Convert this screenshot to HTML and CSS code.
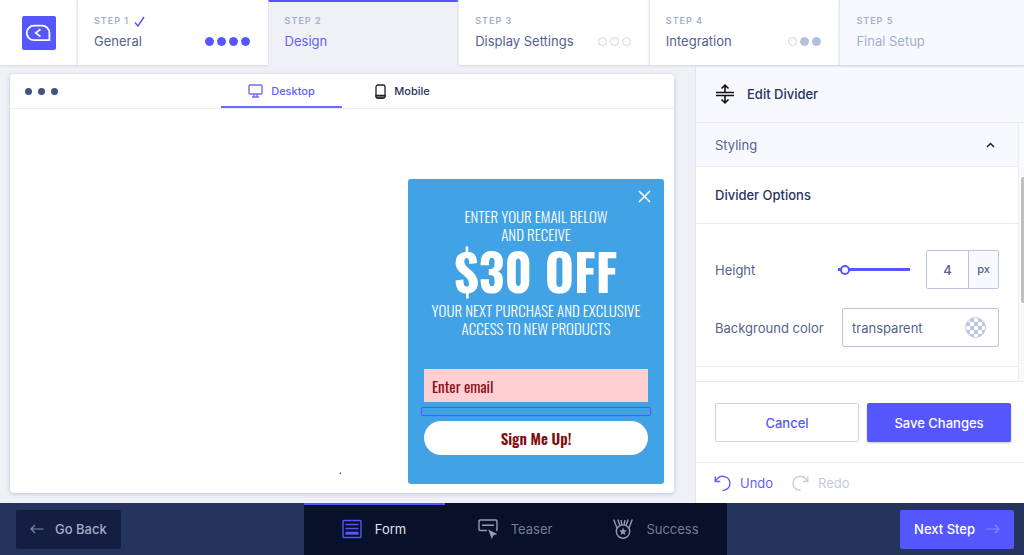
FILE: index.html
```html
<!DOCTYPE html>
<html lang="en">
<head>
    <meta charset="UTF-8">
    <meta name="viewport" content="width=device-width, initial-scale=1.0">
    <title>Campaign Design</title>
    <link rel="stylesheet" href="styles.css">
</head>
<body>
    <header class="steps">
        <a href="#" class="logo" aria-label="Home">
            <svg width="34" height="34" viewBox="0 0 34 34" fill="none">
                <rect width="34" height="34" rx="2" fill="#5656ff"/>
                <path d="M12 9.700h8.200a7.200 7.200 0 0 1 7.200 7.200v7.300H12a7.250 7.250 0 0 1 0-14.500z" stroke="#fff" stroke-width="1.800"/>
                <path d="M18.500 13.200l-4.700 3.700 4.700 3.700" stroke="#fff" stroke-width="1.800"/>
            </svg>
        </a>
        <a href="#general" class="step">
            <span class="step-label">STEP 1
                <svg width="11" height="11" viewBox="0 0 11 11" fill="none" stroke="#5656ff" stroke-width="1.500"><path d="M1 6.500l3 3.500L10 1"/></svg>
            </span>
            <span class="step-row">General
                <span class="dots"><i class="dot done"></i><i class="dot done"></i><i class="dot done"></i><i class="dot done"></i></span>
            </span>
        </a>
        <a href="#design" class="step active">
            <span class="step-label">STEP 2</span>
            <span class="step-row">Design</span>
        </a>
        <a href="#display" class="step">
            <span class="step-label">STEP 3</span>
            <span class="step-row">Display Settings
                <span class="dots"><i class="dot"></i><i class="dot"></i><i class="dot"></i></span>
            </span>
        </a>
        <a href="#integration" class="step">
            <span class="step-label">STEP 4</span>
            <span class="step-row">Integration
                <span class="dots"><i class="dot"></i><i class="dot filled"></i><i class="dot filled"></i></span>
            </span>
        </a>
        <a href="#final" class="step disabled">
            <span class="step-label">STEP 5</span>
            <span class="step-row">Final Setup</span>
        </a>
    </header>

    <main class="workspace">
        <section class="preview">
            <div class="browser">
                <div class="browser-bar">
                    <div class="browser-dots"><i></i><i></i><i></i></div>
                    <button type="button" class="device active">
                        <svg width="15" height="14" viewBox="0 0 15 14" fill="none" stroke="#6c6cff" stroke-width="1.400"><rect x="1" y="1" width="13" height="9" rx="1"/><path d="M6 10v2.500M9 10v2.500M4 13h7"/></svg>
                        Desktop
                    </button>
                    <button type="button" class="device">
                        <svg width="11" height="15" viewBox="0 0 11 15" fill="none" stroke="#222" stroke-width="1.300"><rect x="1" y="1" width="9" height="13" rx="2"/><path d="M1 11.500h9v1q0 1.500-2 1.500H3q-2 0-2-1.500z" fill="#888"/></svg>
                        Mobile
                    </button>
                </div>
                <div class="canvas">
                    <p class="canvas-text">.</p>
                    <form class="popup">
                        <button type="button" class="popup-close" aria-label="Close">
                            <svg width="13" height="13" viewBox="0 0 13 13" stroke="#fff" stroke-width="1.500"><path d="M1 1l11 11M12 1L1 12"/></svg>
                        </button>
                        <p class="popup-text">ENTER YOUR EMAIL BELOW<br>AND RECEIVE</p>
                        <h2 class="popup-offer">$30 OFF</h2>
                        <p class="popup-text">YOUR NEXT PURCHASE AND EXCLUSIVE<br>ACCESS TO NEW PRODUCTS</p>
                        <input type="email" class="popup-email" placeholder="Enter email" aria-label="Enter email">
                        <div class="popup-divider"></div>
                        <button type="button" class="popup-submit">Sign Me Up!</button>
                    </form>
                </div>
            </div>
        </section>

        <aside class="sidebar">
            <div class="sidebar-title">
                <svg width="18" height="20" viewBox="0 0 18 20" fill="none" stroke="#111" stroke-width="1.600"><path d="M0 8.500h18M0 11.500h18M9 8.500V1.500M5.500 4.500L9 1.200l3.500 3.300M9 11.500v7M5.500 15.500L9 18.800l3.500-3.300"/></svg>
                <h1>Edit Divider</h1>
            </div>
            <div class="options">
                <div class="options-list">
                    <button type="button" class="accordion">Styling
                        <svg width="9" height="6" viewBox="0 0 9 6" fill="none" stroke="#222" stroke-width="1.500"><path d="M1 5l3.500-3.500L8 5"/></svg>
                    </button>
                    <h2 class="options-heading">Divider Options</h2>
                    <div class="fields">
                        <div class="field">
                            <label for="height">Height</label>
                            <input type="range" id="height" class="slider" min="0" max="100" value="4">
                            <span class="unit-input">
                                <input type="text" value="4" aria-label="Height in pixels">
                                <span>px</span>
                            </span>
                        </div>
                        <div class="field">
                            <label for="color">Background color</label>
                            <span class="color-input">
                                <input type="text" id="color" value="transparent">
                                <i class="swatch"></i>
                            </span>
                        </div>
                    </div>
                </div>
                <div class="scrollbar"><div class="thumb"></div></div>
            </div>
            <div class="actions">
                <button type="button" class="btn btn-outline">Cancel</button>
                <button type="button" class="btn btn-primary">Save Changes</button>
            </div>
            <div class="history">
                <button type="button" class="history-btn">
                    <svg width="17" height="17" viewBox="0 0 17 17" fill="none" stroke="currentColor" stroke-width="1.400"><path d="M1.200 1.500v5h5M1.400 6.200C4 2 8 .500 11.500 1.800c5.500 2 6 10.200.5 12.700-1 .6-2 .9-3.500 1"/></svg>
                    Undo
                </button>
                <button type="button" class="history-btn" disabled>
                    <svg width="17" height="17" viewBox="0 0 17 17" fill="none" stroke="currentColor" stroke-width="1.400"><path d="M15.800 1.500v5h-5M15.600 6.200C13 2 9 .500 5.500 1.800c-5.500 2-6 10.200-.5 12.700 1 .6 2 .9 3.500 1"/></svg>
                    Redo
                </button>
            </div>
        </aside>
    </main>

    <footer class="bottom-bar">
        <button type="button" class="btn btn-back">
            <svg width="14" height="10" viewBox="0 0 14 10" fill="none" stroke="#7f89a8" stroke-width="1.200"><path d="M13.500 5H1M5 1L1 5l4 4"/></svg>
            Go Back
        </button>
        <nav class="views">
            <a href="#form" class="view active">
                <svg width="20" height="20" viewBox="0 0 20 20" fill="none" stroke="#5656ff" stroke-width="1.400"><rect x="1" y="1.500" width="18" height="17" rx="1"/><path d="M3.500 5.500h13M3.500 9.500h13"/><path d="M3.500 14.200h13" stroke-width="3"/></svg>
                Form
            </a>
            <a href="#teaser" class="view">
                <svg width="20" height="20" viewBox="0 0 20 20" fill="none" stroke="#929bb9" stroke-width="1.400"><path d="M9 11.500H2q-1 0-1-1V2q0-1 1-1h16q1 0 1 1v8.500q0 1-1 1M4 6.200h12"/><path d="M10.200 10.500l9 4.600-3.800 1.300-1.600 3.600z" fill="#929bb9" stroke="none"/></svg>
                Teaser
            </a>
            <a href="#success" class="view">
                <svg width="20" height="20" viewBox="0 0 20 20" fill="none" stroke="#929bb9" stroke-width="1.400"><circle cx="10" cy="12.600" r="6.700"/><path d="M4 9L.700.500M7 6.500L4.800.500M13 6.500l2.200-6M16 9L19.300.500M9 5.800L8 1M11 5.800L12 1"/><path d="M10 8.700l1.100 2.600 2.800.2-2.200 1.800.7 2.800-2.400-1.500-2.400 1.500.7-2.800-2.200-1.800 2.800-.2z" fill="#929bb9" stroke="none"/></svg>
                Success
            </a>
        </nav>
        <button type="button" class="btn btn-next">
            Next Step
            <svg width="14" height="10" viewBox="0 0 14 10" fill="none" stroke="#8888ff" stroke-width="1.200"><path d="M.500 5H13M9 1l4 4-4 4"/></svg>
        </button>
    </footer>
</body>
</html>
```
FILE: styles.css
```css
* {
    box-sizing: border-box;
}

body {
    margin: 0;
    min-height: 100vh;
    display: flex;
    flex-direction: column;
    background: #f0f1f7;
    color: #53638c;
    font-family: Inter, "Liberation Sans", sans-serif;
    font-size: 13px;
    line-height: 16px;
}

h1, h2, p {
    margin: 0;
}

a {
    color: inherit;
    text-decoration: none;
}

button, input {
    font: inherit;
    color: inherit;
    margin: 0;
}

button {
    cursor: pointer;
    border: none;
    background: none;
    padding: 0;
}

svg {
    display: block;
    flex: none;
}

/* Step header */
.steps {
    display: grid;
    grid-template-columns: 77px repeat(4, 191fr) 185fr;
    height: 65px;
    z-index: 1;
}

.logo {
    display: flex;
    align-items: center;
    justify-content: center;
    background: #fff;
    box-shadow: 0 1px 2px #d3d6e0;
}

.step {
    display: flex;
    flex-direction: column;
    gap: 4px;
    padding: 13px 18px 0 16px;
    background: #fff;
    border-left: 1px solid #e6e9f5;
    box-shadow: 0 1px 2px #d3d6e0;
}

.step.active {
    background: #f0f1f7;
    border-top: 2px solid #5656ff;
    padding-top: 11px;
    box-shadow: none;
    color: #5f5fff;
}

.step.disabled {
    background: #f8f9fe;
    color: #a3aeca;
}

.step-label {
    display: flex;
    align-items: center;
    gap: 5px;
    color: #a3aeca;
    font-size: 9px;
    font-weight: 600;
    letter-spacing: 1px;
}

.step-row {
    display: flex;
    align-items: center;
    justify-content: space-between;
}

.dots {
    display: flex;
    gap: 3px;
}

.dot {
    width: 9px;
    height: 9px;
    border: 1px solid #ccd4e8;
    border-radius: 50%;
}

.dot.done {
    background: #5656ff;
    border-color: #5656ff;
}

.dot.filled {
    background: #b3bfdb;
    border-color: #b3bfdb;
}

/* Preview */
.workspace {
    flex: 1;
    display: flex;
}

.preview {
    flex: 1;
    display: flex;
    padding: 9px 21px 10px 10px;
}

.browser {
    flex: 1;
    display: flex;
    flex-direction: column;
    background: #fff;
    border-radius: 4px;
    box-shadow: 0 1px 4px #bfc3d2;
}

.browser-bar {
    display: grid;
    grid-template-columns: 1fr 121px 121px 1fr;
    height: 35px;
    border-bottom: 1px solid #eceef7;
}

.browser-dots {
    display: flex;
    align-items: center;
    gap: 6px;
    padding-left: 15px;
}

.browser-dots i {
    width: 7px;
    height: 7px;
    border-radius: 50%;
    background: #43537f;
}

.device {
    display: flex;
    align-items: center;
    justify-content: center;
    gap: 8px;
    font-size: 11px;
    font-weight: 500;
    color: #26345f;
    border-top: 2px solid transparent;
    border-bottom: 2px solid transparent;
}

.device.active {
    color: #5f5fff;
    border-bottom-color: #6c6cff;
}

.canvas {
    flex: 1;
    display: grid;
    grid-template-columns: 1fr 256px;
    align-items: end;
    padding: 10px 10px 9px 0;
}

.canvas-text {
    padding: 0 66px 6px 0;
    text-align: right;
    color: #333;
    font-size: 11px;
}

/* Popup */
.popup {
    display: flex;
    flex-direction: column;
    padding: 11px 16px 29px;
    background: #41a2e6;
    border-radius: 3px;
    color: #fff;
    font-family: Oswald, "Liberation Sans Narrow", "Liberation Sans", sans-serif;
    text-align: center;
}

.popup-close {
    align-self: flex-end;
    margin-right: -3px;
}

.popup-text {
    margin-top: 4px;
    font-size: 15px;
    font-weight: 300;
    line-height: 18px;
}

.popup-offer {
    font-size: 50px;
    line-height: 54px;
    font-weight: 700;
}

.popup-email {
    height: 33px;
    margin: 32px 0 5px;
    padding: 0 8px;
    border: none;
    border-radius: 0;
    background: #ffcfd2;
    font-size: 15px;
}

.popup-email::placeholder {
    color: #8b1018;
    opacity: 1;
}

.popup-divider {
    height: 9px;
    margin: 0 -3px 5px;
    border: 1px solid #5656ff;
    border-radius: 2px;
    box-shadow: 0 0 1px #5656ff;
}

.popup-submit {
    height: 34px;
    border-radius: 17px;
    background: #fff;
    color: #830a0e;
    font-size: 15px;
    font-weight: 600;
}

/* Sidebar */
.sidebar {
    width: 329px;
    display: flex;
    flex-direction: column;
    background: #fff;
    border-left: 1px solid #e2e5f0;
}

.sidebar-title {
    display: flex;
    align-items: center;
    gap: 13px;
    height: 58px;
    padding-left: 20px;
    background: #f8f9fe;
    border-bottom: 1px solid #e6eaf5;
    box-shadow: inset 0 2px 2px -1px #d3d6e0;
    color: #26345f;
}

.sidebar-title h1 {
    font-size: 13px;
    font-weight: 500;
}

.options {
    flex: 1;
    display: flex;
    border-bottom: 1px solid #e6eaf5;
}

.options-list {
    flex: 1;
}

.accordion {
    display: flex;
    align-items: center;
    justify-content: space-between;
    width: 100%;
    height: 44px;
    padding: 0 23px 0 19px;
    background: #f8f9fe;
    border-bottom: 1px solid #e6eaf5;
}

.options-heading {
    padding: 20px 19px;
    border-bottom: 1px solid #e6eaf5;
    color: #26345f;
    font-size: 13px;
    font-weight: 500;
}

.fields {
    display: flex;
    flex-direction: column;
    gap: 19px;
    padding: 26px 19px 19px;
    border-bottom: 1px solid #e6eaf5;
}

.field {
    display: flex;
    align-items: center;
}

.field label {
    flex: 1;
}

.slider {
    appearance: none;
    width: 72px;
    height: 10px;
    margin-right: 16px;
    background: linear-gradient(#5656ff, #5656ff) center / 100% 3px no-repeat;
}

.slider::-webkit-slider-thumb {
    appearance: none;
    width: 10px;
    height: 10px;
    border: 2px solid #5656ff;
    border-radius: 50%;
    background: #fff;
}

.unit-input {
    display: flex;
    width: 73px;
    height: 39px;
    border: 1px solid #b9c4df;
    border-radius: 2px;
}

.unit-input input {
    width: 42px;
    padding: 0;
    border: none;
    border-right: 1px solid #b9c4df;
    background: #fff;
    font-weight: 500;
    text-align: center;
}

.unit-input span {
    flex: 1;
    background: #f8f9fe;
    font-size: 11px;
    font-weight: 500;
    line-height: 37px;
    text-align: center;
}

.color-input {
    display: flex;
    align-items: center;
    width: 157px;
    height: 39px;
    padding: 0 12px 0 9px;
    border: 1px solid #b9c4df;
    border-radius: 2px;
}

.color-input input {
    flex: 1;
    min-width: 0;
    padding: 0;
    border: none;
    background: none;
}

.swatch {
    width: 21px;
    height: 21px;
    border: 1px solid #c4cce2;
    border-radius: 50%;
    background: repeating-conic-gradient(#bcc6e0 0 25%, #fff 0 50%) 0 0 / 8px 8px;
}

.scrollbar {
    width: 6px;
    padding: 54px 0 0 2px;
    border-left: 1px solid #eceef4;
    background: #fafafa;
}

.thumb {
    height: 126px;
    border-radius: 2px 0 0 2px;
    background: #bfbfc2;
}

.actions {
    display: grid;
    grid-template-columns: 1fr 1fr;
    gap: 8px;
    padding: 21px 13px 20px 19px;
    border-bottom: 1px solid #e6eaf5;
}

.btn {
    display: flex;
    align-items: center;
    justify-content: center;
    height: 39px;
    border-radius: 2px;
    font-weight: 500;
}

.btn-outline {
    border: 1px solid #cfd5e6;
    color: #5656ff;
}

.btn-primary {
    background: #5656ff;
    color: #fff;
    box-shadow: 0 1px 2px #bfc3d8;
}

.history {
    display: flex;
    gap: 19px;
    height: 40px;
    padding-left: 18px;
}

.history-btn {
    display: flex;
    align-items: center;
    gap: 9px;
    color: #5f5fff;
}

.history-btn:disabled {
    color: #c3cbdd;
}

/* Footer */
.bottom-bar {
    display: grid;
    grid-template-columns: 1fr 423px 1fr;
    align-items: center;
    height: 52px;
    padding: 0 10px 0 16px;
    background: #25345d;
}

.btn-back {
    justify-self: start;
    gap: 11px;
    padding: 0 14px;
    background: #131e42;
    color: #a5adc4;
}

.views {
    display: grid;
    grid-template-columns: repeat(3, 1fr);
    height: 100%;
    background: #091029;
}

.view {
    display: flex;
    align-items: center;
    justify-content: center;
    gap: 13px;
    border-top: 2px solid transparent;
    border-bottom: 2px solid transparent;
    color: #737d9c;
}

.view.active {
    border-top-color: #5656ff;
    color: #e0e3ee;
}

.btn-next {
    justify-self: end;
    gap: 11px;
    padding: 0 14px;
    background: #5656ff;
    color: #fff;
}
```
